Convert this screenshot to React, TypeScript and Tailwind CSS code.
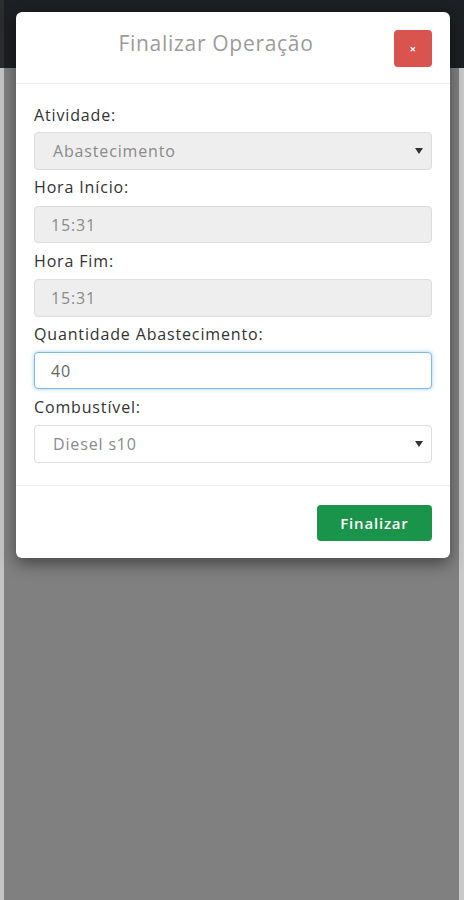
import React from "react";

const font = { fontFamily: '"Open Sans", "Noto Sans", sans-serif' };

function Arrow() {
  return (
    <svg width="8" height="6" viewBox="0 0 8 6" className="shrink-0">
      <path d="M0 0 L8 0 L4 6 Z" fill="#333" />
    </svg>
  );
}

export default function App() {
  return (
    <div className="relative w-[464px] h-[900px] overflow-hidden flex flex-col" style={font}>
      <div className="h-[68px] bg-[#1c1f23] shrink-0 flex">
        <div className="w-[4px] bg-[#2b2d30]" />
      </div>
      <div className="flex-1 flex">
        <div className="w-[4px] bg-[#c4c4c4]" />
        <div className="flex-1 bg-[#808080]" />
        <div className="w-[5px] bg-[#c9c9c9]" />
      </div>

      <div className="absolute left-[16px] top-[12px] w-[434px] bg-white rounded-[6px] shadow-[0_6px_16px_rgba(0,0,0,0.45)]">
        <div className="flex items-center h-[72px] pl-[18px] pr-[18px] border-b border-[#eeeeee]">
          <div className="flex-1 text-center text-[21px] tracking-[0.7px] text-[#9b9b9b] pl-[4px] mb-[8px]">Finalizar Operação</div>
          <div className="w-[38px] h-[37px] mt-[2px] rounded-[4px] bg-[#d9534f] flex items-center justify-center text-white text-[11px] leading-none font-bold">×</div>
        </div>
        <div className="px-[18px] pt-[13px] pb-[22px] text-[16px] tracking-[0.85px] text-[#333]">
          <div className="leading-[20px] mb-[7px] pt-[8px]">Atividade:</div>
          <div className="h-[38px] rounded-[4px] border border-[#dddddd] bg-[#eeeeee] flex items-center pl-[18px] pr-[8px] text-[#8a8a8a]">
            <span className="flex-1">Abastecimento</span>
            <Arrow />
          </div>
          <div className="leading-[20px] mt-[7px] mb-[9px]">Hora Início:</div>
          <div className="h-[37px] rounded-[4px] border border-[#dddddd] bg-[#eeeeee] flex items-center pl-[16px] text-[#8a8a8a]">15:31</div>
          <div className="leading-[20px] mt-[8px] mb-[8px]">Hora Fim:</div>
          <div className="h-[38px] rounded-[4px] border border-[#dddddd] bg-[#eeeeee] flex items-center pl-[16px] text-[#8a8a8a]">15:31</div>
          <div className="leading-[20px] mt-[7px] mb-[8px]">Quantidade Abastecimento:</div>
          <div className="h-[37px] rounded-[4px] border border-[#7fb8ea] bg-white flex items-center pl-[16px] text-[#666] shadow-[0_0_4px_rgba(102,175,233,0.6)]">40</div>
          <div className="leading-[20px] mt-[8px] mb-[8px]">Combustível:</div>
          <div className="h-[38px] rounded-[4px] border border-[#dddddd] bg-white flex items-center pl-[18px] pr-[8px] text-[#8a8a8a]">
            <span className="flex-1">Diesel s10</span>
            <Arrow />
          </div>
        </div>
        <div className="border-t border-[#eeeeee] flex justify-end pt-[19px] pb-[17px] pr-[18px]">
          <div className="w-[115px] h-[36px] rounded-[4px] bg-[#1a944a] text-white text-[15px] tracking-[0.8px] font-semibold flex items-center justify-center">Finalizar</div>
        </div>
      </div>
    </div>
  );
}
